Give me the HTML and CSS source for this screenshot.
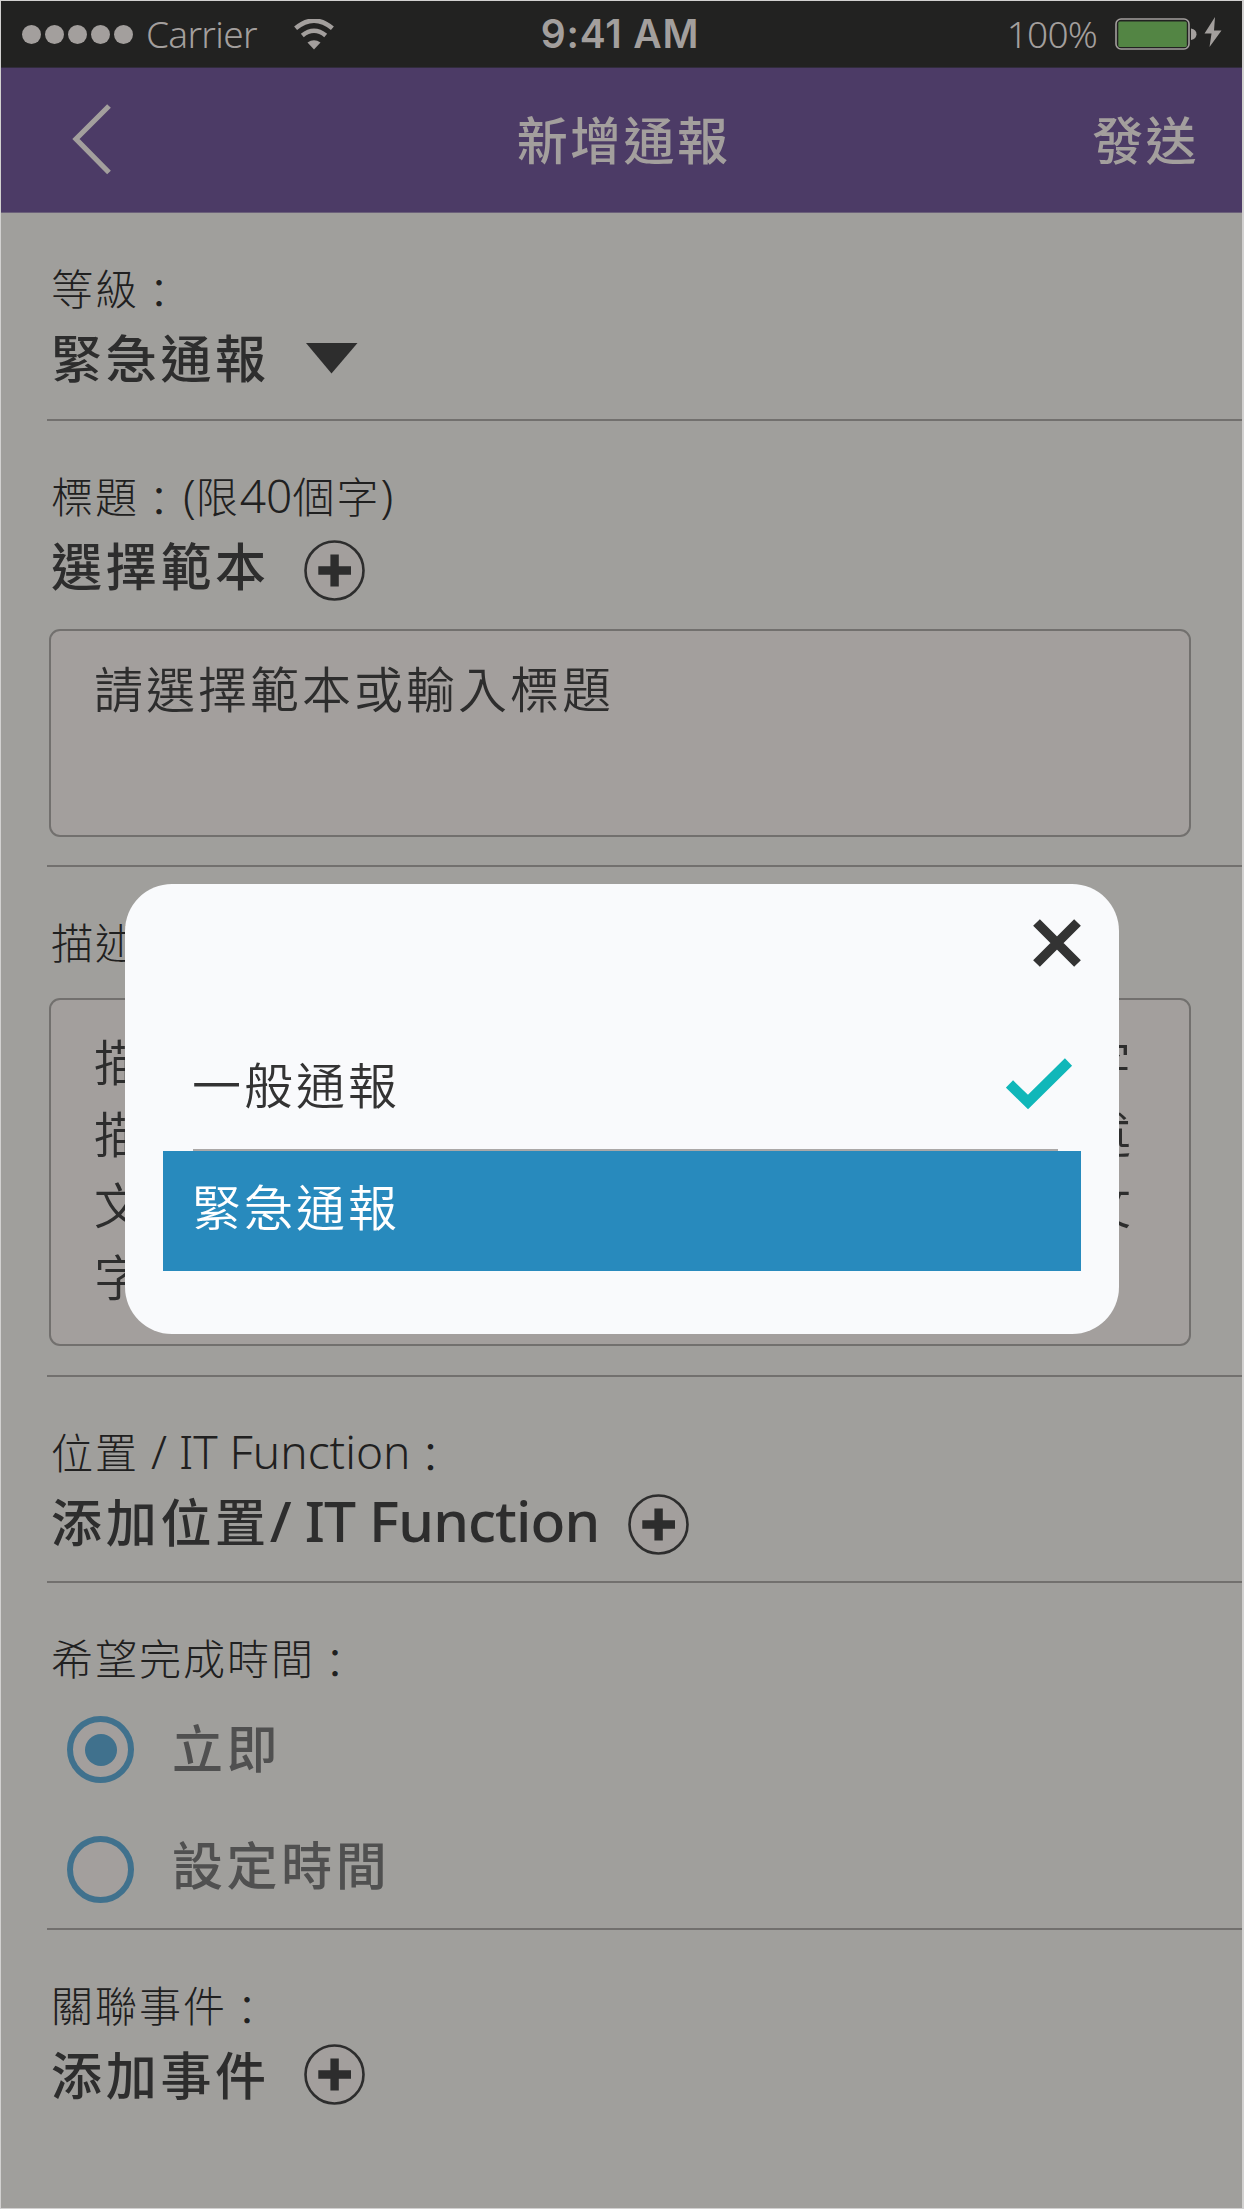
FILE: index.html
```html
<!DOCTYPE html>
<html lang="zh-Hant">
<head>
<meta charset="utf-8">
<title>新增通報</title>
<link rel="stylesheet" href="styles.css">
</head>
<body>
<div class="screen">
  <div class="status">
    <div class="status-left">
      <span class="dots"><i></i><i></i><i></i><i></i><i></i></span>
      <span class="carrier">Carrier</span>
      <svg class="wifi" width="40" height="31" viewBox="0 0 40 31">
        <g fill="none" stroke="#a39f9d" stroke-width="4.6">
          <path d="M1.6 9.3Q20-6 38.4 9.3"/>
          <path d="M8.3 16.5Q20 7 31.7 16.5"/>
        </g>
        <path d="M13.5 23.5Q20 19 26.5 23.5L20 30.5Z" fill="#a39f9d"/>
      </svg>
    </div>
    <div class="clock">9:41 AM</div>
    <div class="status-right">
      <span class="percent">100%</span>
      <svg class="battery" width="108" height="34" viewBox="0 0 108 34">
        <rect x="1" y="2" width="73" height="30" rx="5" fill="none" stroke="#a39f9d" stroke-width="1.6"/>
        <rect x="3.300" y="4.500" width="68.500" height="25.500" rx="1.500" fill="#538544"/>
        <path d="M76 11.500Q81.500 12.500 81.500 17.200T76 23Z" fill="#a39f9d"/>
        <path d="M100 0L89.500 16.500H96.500L94.500 30L106.500 13.500H99Z" fill="#a39f9d"/>
      </svg>
    </div>
  </div>

  <header class="nav">
    <svg class="back" width="40" height="72" viewBox="0 0 40 72"><path d="M37 2L4 35L37 68.500" fill="none" stroke="#a39f9d" stroke-width="5.200"/></svg>
    <h1>新增通報</h1>
    <span class="send">發送</span>
  </header>

  <main>
    <section class="s-level">
      <div class="label">等級<span class="colon">：</span></div>
      <div class="pick"><b>緊急通報</b><svg class="caret" width="52" height="31" viewBox="0 0 52 31"><path d="M0 0H51.500L25.500 30.500Z" fill="#2d2d2d"/></svg></div>
    </section>
    <section class="s-title">
      <div class="label">標題<span class="colon">：</span><span class="lat">(</span>限<span class="lat">40</span>個字<span class="lat">)</span></div>
      <div class="pick"><b>選擇範本</b><svg class="plus low" width="61" height="61" viewBox="0 0 61 61"><use href="#plus"/></svg></div>
      <div class="box">請選擇範本或輸入標題</div>
    </section>
    <section class="s-desc">
      <div class="label">描述<span class="colon">：</span></div>
      <div class="box">描述文字描述文字描述文字描述文字描述文字<br>描述文字描述文字，描述文字描述文字，描述<br>文字，描述文字描述文字，描述文字，描述文<br>字</div>
    </section>
    <section class="s-place">
      <div class="label">位置<span class="lat fn"> / IT Function</span><span class="colon">：</span></div>
      <div class="pick"><b>添加位置<span class="lat fnb">/ IT Function</span></b><svg class="plus near" width="61" height="61" viewBox="0 0 61 61"><use href="#plus"/></svg></div>
    </section>
    <section class="s-time">
      <div class="label">希望完成時間<span class="colon">：</span></div>
      <div class="radio"><i class="on"></i><b>立即</b></div>
      <div class="radio"><i></i><b>設定時間</b></div>
    </section>
    <section class="s-event">
      <div class="label">關聯事件<span class="colon">：</span></div>
      <div class="pick"><b>添加事件</b><svg class="plus" width="61" height="61" viewBox="0 0 61 61"><g id="plus"><circle cx="30.500" cy="30.500" r="29" fill="#a39f9d" stroke="#2d2d2d" stroke-width="2.600"/><path d="M14.300 30.500H47M30.600 14.500V46.500" stroke="#2d2d2d" stroke-width="8.400"/></g></svg></div>
    </section>
  </main>

  <div class="modal">
    <svg class="close" width="48" height="48" viewBox="0 0 48 48"><path d="M3.500 3.500L44.500 44.500M44.500 3.500L3.500 44.500" stroke="#333" stroke-width="9.500"/></svg>
    <div class="option">
      <span>一般通報</span>
      <svg class="check" width="67" height="52" viewBox="0 0 67 52"><path d="M3.500 26L22 44L62.500 4" fill="none" stroke="#10b7b9" stroke-width="10.200"/></svg>
    </div>
    <div class="option selected"><span>緊急通報</span></div>
  </div>
</div>
</body>
</html>
```

FILE: styles.css
```css
* { box-sizing: border-box; }
body {
  margin: 0;
  background: #d2d1d0;
  font-family: "Noto Sans CJK TC", sans-serif;
}
.screen {
  position: relative;
  width: 1244px;
  height: 2209px;
  padding: 1px 2px 1px 1px;
  overflow: hidden;
}
.status {
  display: grid;
  grid-template-columns: 1fr auto 1fr;
  align-items: center;
  height: 67px;
  padding: 0 19px 0 21px;
  background: #222221;
  color: #a39f9d;
  border-bottom: 1px solid #312c3c;
}
.status-left, .status-right { display: flex; align-items: center; }
.status-right { justify-content: flex-end; }
.dots { display: flex; gap: 4px; }
.dots i { width: 19px; height: 19px; border-radius: 50%; background: #a39f9d; }
.carrier { margin-left: 13px; width: 112px; font: 350 37px/66px "Noto Sans", sans-serif; letter-spacing: -0.7px; white-space: nowrap; }
.wifi { margin-left: 36px; }
.clock { margin-right: 5px; font: 600 39px/66px Inter, sans-serif; letter-spacing: 0.8px; white-space: nowrap; }
.percent { font: 350 37px/66px "Noto Sans", sans-serif; letter-spacing: -0.8px; }
.battery { margin-left: 18px; }
.nav {
  display: grid;
  grid-template-columns: 1fr auto 1fr;
  align-items: center;
  height: 145px;
  padding: 0 45px 0 71px;
  background: #4c3b66;
  color: #a39f9d;
  border-bottom: 1px solid #6b607a;
}
.nav h1, .send { margin: 0; padding-bottom: 5px; font-size: 51px; line-height: 72px; font-weight: 500; letter-spacing: 2.4px; }
.nav h1 { margin: 0 22px 0 0; }
.nav .send { justify-self: end; margin-right: -2px; }
main { height: 1995px; background: #a09f9c; color: #2d2d2d; }
section { margin-left: 46px; padding: 44px 0 0 4px; border-bottom: 2px solid #72706e; }
.s-level { height: 208px; }
.s-title { height: 446px; }
.s-desc { height: 510px; }
.s-place { height: 206px; }
.s-time { height: 347px; }
.s-event { border: 0; }
.label { height: 60px; font-size: 42px; line-height: 60px; font-weight: 300; letter-spacing: 2px; color: #202020; white-space: nowrap; }
.colon { position: relative; top: 4px; left: -1px; }
.lat { font: 350 46px/0 "Noto Sans", sans-serif; letter-spacing: 0; white-space: pre; }
.pick { display: flex; align-items: center; height: 78px; }
.pick b { font-size: 51px; line-height: 76px; padding-bottom: 1px; font-weight: 500; letter-spacing: 3.7px; white-space: nowrap; }
.pick .fnb { font-size: 57px; line-height: 0; font-weight: 550; letter-spacing: -0.9px; }
.caret { margin: 5px 0 0 36px; }
.plus { margin: 2px 0 0 34px; }
.low { margin-top: 12px; }
.near { margin: 8px 0 0 29px; }
.box {
  width: 1142px;
  margin-left: -2px;
  padding: 20px 0 0 43px;
  border: 2px solid #72706e;
  border-radius: 11px;
  background: #a39f9d;
  font-size: 49px;
  line-height: 71.6px;
  font-weight: 350;
  letter-spacing: 3px;
  white-space: nowrap;
}
.s-title .box { height: 208px; margin-top: 26px; }
.s-desc .box { height: 348px; margin-top: 27px; padding-top: 24px; }
.radio { display: flex; align-items: center; height: 67px; margin: 29px 0 53px 16px; color: #505050; }
.radio i { display: grid; place-items: center; width: 67px; height: 67px; border: 6px solid #40718d; border-radius: 50%; background: #a39f9d; }
.radio .on::after { content: ""; width: 32px; height: 32px; border-radius: 50%; background: #40718d; }
.radio b { margin-left: 38px; padding-bottom: 7px; font-size: 51px; line-height: 67px; font-weight: 500; letter-spacing: 3.6px; }
.radio + .radio { margin-top: 0; }
.radio + .radio b { padding-bottom: 12px; }
.modal {
  position: absolute;
  left: 124.6px;
  top: 884px;
  width: 994px;
  height: 450px;
  padding: 35px 38px 0 38.400px;
  border-radius: 47px;
  background: #f9fafc;
  color: #333;
}
.close { display: block; margin-left: auto; }
.option { display: grid; grid-template-columns: 1fr auto; align-items: center; height: 122px; margin-top: 62px; padding: 0 8px 14px 29px; font-size: 49px; line-height: 72px; font-weight: 350; letter-spacing: 3px; }
.option:not(.selected) { background: linear-gradient(#aba8a7, #aba8a7) 30px 100% / 865px 2px no-repeat; }
.check { margin-top: 2px; }
.selected { height: 120px; margin-top: 0; padding-bottom: 12px; background: #288abd; color: #fff; }
```
